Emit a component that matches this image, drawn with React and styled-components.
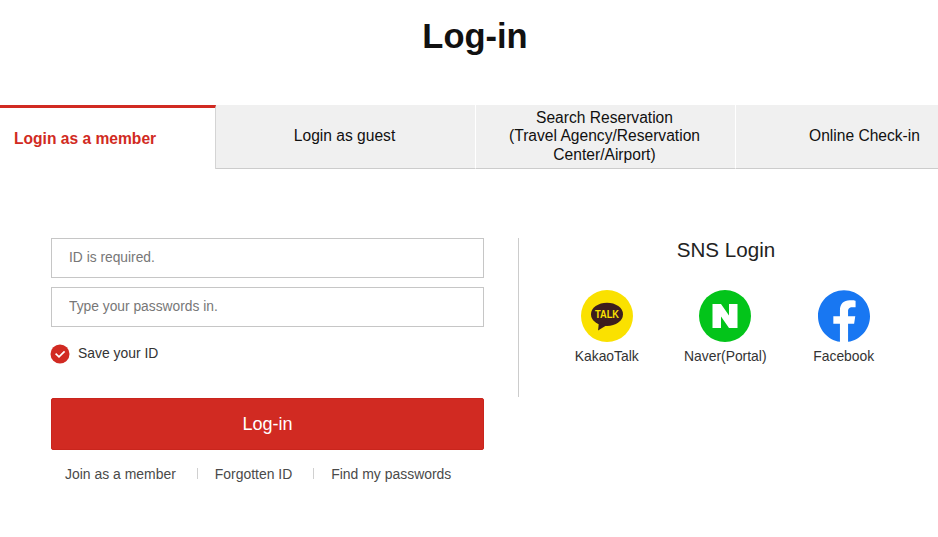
import React from 'react'
import styled, { createGlobalStyle } from 'styled-components'

const Global = createGlobalStyle`
  html, body { margin: 0; padding: 0; background: #fff; }
  body { font-family: "Liberation Sans", Arial, sans-serif; color: #222; width: 938px; height: 537px; overflow: hidden; }
  * { box-sizing: border-box; }
`

const Page = styled.div`
  width: 938px;
  height: 537px;
  overflow: hidden;
`
const Title = styled.h1`
  margin: 0;
  height: 105px;
  padding-top: 15px;
  padding-left: 12px;
  text-align: center;
  font-size: 34.5px;
  line-height: 42px;
  font-weight: 700;
  color: #111;
`
const Tabs = styled.div`
  display: flex;
  height: 64px;
`
const Tab = styled.div`
  width: ${p => p.$w}px;
  flex: none;
  display: flex;
  align-items: center;
  justify-content: center;
  text-align: center;
  font-size: 15.6px;
  line-height: 18.5px;
  color: #111;
  background: #f0f0f0;
  border-bottom: 1px solid #ccc;
  padding-left: ${p => p.$pad || 0}px;
  padding-right: 2px;
  &:not(:last-child) { border-right: 1px solid #fff; }
`
const ActiveTab = styled.div`
  width: 216px;
  flex: none;
  border-top: 3px solid #d12a22;
  border-right: 1px solid #d4d4d4;
  padding: 22px 0 0 14px;
  font-size: 15.6px;
  line-height: 18px;
  font-weight: 700;
  color: #d12a22;
`
const Body = styled.div`
  display: flex;
  padding: 69px 0 0 51px;
`
const FormCol = styled.div`
  width: 433px;
  flex: none;
`
const Input = styled.input`
  display: block;
  width: 100%;
  height: 40px;
  margin-bottom: 9px;
  padding: 0 17px 2px;
  border: 1px solid #c6c6c6;
  border-radius: 0;
  outline: none;
  font-family: inherit;
  font-size: 13.8px;
  &::placeholder { color: #777; opacity: 1; }
`
const SaveRow = styled.label`
  display: flex;
  align-items: center;
  gap: 8px;
  height: 20px;
  margin-top: 17px;
  margin-left: -1px;
  font-size: 13.9px;
  line-height: 18px;
  color: #333;
  span { position: relative; top: -1px; }
`
const Submit = styled.button`
  display: block;
  width: 100%;
  height: 52px;
  margin-top: 34px;
  border: 1px solid #c9251d;
  border-radius: 2px;
  background: #d12a22;
  color: #fff;
  font-family: inherit;
  font-size: 18px;
`
const Links = styled.div`
  display: flex;
  align-items: center;
  margin-top: 15px;
  padding-left: 14px;
  font-size: 13.95px;
  line-height: 18px;
  color: #4a4a4a;
`
const LinkItem = styled.a`
  &:not(:last-child)::after {
    content: "";
    display: inline-block;
    width: 1px;
    height: 11px;
    margin: 0 17px 0 21px;
    background: #d0d0d0;
  }
`
const Divider = styled.div`
  width: 1px;
  height: 159px;
  margin-left: 34px;
  background: #ccc;
  flex: none;
`
const SnsCol = styled.div`
  width: 414px;
  flex: none;
  display: flex;
  flex-direction: column;
  align-items: center;
`
const SnsTitle = styled.h2`
  margin: 0;
  font-size: 20.6px;
  line-height: 24px;
  font-weight: 400;
  color: #222;
`
const SnsRow = styled.div`
  display: flex;
  margin-top: 28px;
  margin-left: -1.5px;
`
const SnsItem = styled.div`
  width: 118.5px;
  display: flex;
  flex-direction: column;
  align-items: center;
  gap: 5px;
  font-size: 13.9px;
  line-height: 18px;
  color: #333;
  white-space: nowrap;
`

const CheckIcon = () => (
  <svg width="20" height="20" viewBox="0 0 20 20">
    <circle cx="10" cy="10" r="9.5" fill="#d12a22" />
    <path d="M5.6 9.6 L9 12.8 L14.6 7.4" fill="none" stroke="#fff" strokeWidth="1.7" />
  </svg>
)

const KakaoIcon = () => (
  <svg width="52" height="52" viewBox="0 0 52 52">
    <circle cx="26" cy="26" r="26" fill="#fae100" />
    <ellipse cx="26" cy="24.3" rx="16" ry="11.6" fill="#3c1e1e" />
    <path d="M18 32 L17 40.5 L26 35 Z" fill="#3c1e1e" />
    <text x="26" y="28.4" textAnchor="middle" fontFamily="Liberation Sans" fontSize="11.2" fontWeight="700" textLength="24" lengthAdjust="spacingAndGlyphs" fill="#fae100">TALK</text>
  </svg>
)

const NaverIcon = () => (
  <svg width="52" height="52" viewBox="0 0 52 52">
    <circle cx="26" cy="26" r="26" fill="#03c41a" />
    <path d="M13.5 14 H22 L30 25.5 V14 H38.5 V38 H30 L22 26.5 V38 H13.5 Z" fill="#fff" />
  </svg>
)

const FacebookIcon = () => (
  <svg width="52" height="52" viewBox="0 0 24 24">
    <circle cx="12" cy="12" r="11.8" fill="#fff" />
    <path d="M24 12.073c0-6.627-5.373-12-12-12s-12 5.373-12 12c0 5.99 4.388 10.954 10.125 11.854v-8.385H7.078v-3.47h3.047V9.43c0-3.007 1.792-4.669 4.533-4.669 1.312 0 2.686.235 2.686.235v2.953H15.83c-1.491 0-1.956.925-1.956 1.874v2.25h3.328l-.532 3.47h-2.796v8.385C19.612 23.027 24 18.062 24 12.073z" fill="#1877f2" />
  </svg>
)

const tabs = [
  { w: 260, label: 'Login as guest' },
  { w: 260, label: <>Search Reservation<br />(Travel Agency/Reservation<br />Center/Airport)</> },
  { w: 202, label: 'Online Check-in', pad: 57 },
]

const sns = [
  { name: 'KakaoTalk', Icon: KakaoIcon },
  { name: 'Naver(Portal)', Icon: NaverIcon },
  { name: 'Facebook', Icon: FacebookIcon },
]

const App = () => (
  <Page>
    <Global />
    <Title>Log-in</Title>
    <Tabs>
      <ActiveTab>Login as a member</ActiveTab>
      {tabs.map((t, i) => <Tab key={i} $w={t.w} $pad={t.pad}>{t.label}</Tab>)}
    </Tabs>
    <Body>
      <FormCol>
        <Input placeholder="ID is required." />
        <Input placeholder="Type your passwords in." />
        <SaveRow><CheckIcon /><span>Save your ID</span></SaveRow>
        <Submit>Log-in</Submit>
        <Links>
          <LinkItem>Join as a member</LinkItem>
          <LinkItem>Forgotten ID</LinkItem>
          <LinkItem>Find my passwords</LinkItem>
        </Links>
      </FormCol>
      <Divider />
      <SnsCol>
        <SnsTitle>SNS Login</SnsTitle>
        <SnsRow>
          {sns.map(({ name, Icon }) => (
            <SnsItem key={name}><Icon />{name}</SnsItem>
          ))}
        </SnsRow>
      </SnsCol>
    </Body>
  </Page>
)

export default App
